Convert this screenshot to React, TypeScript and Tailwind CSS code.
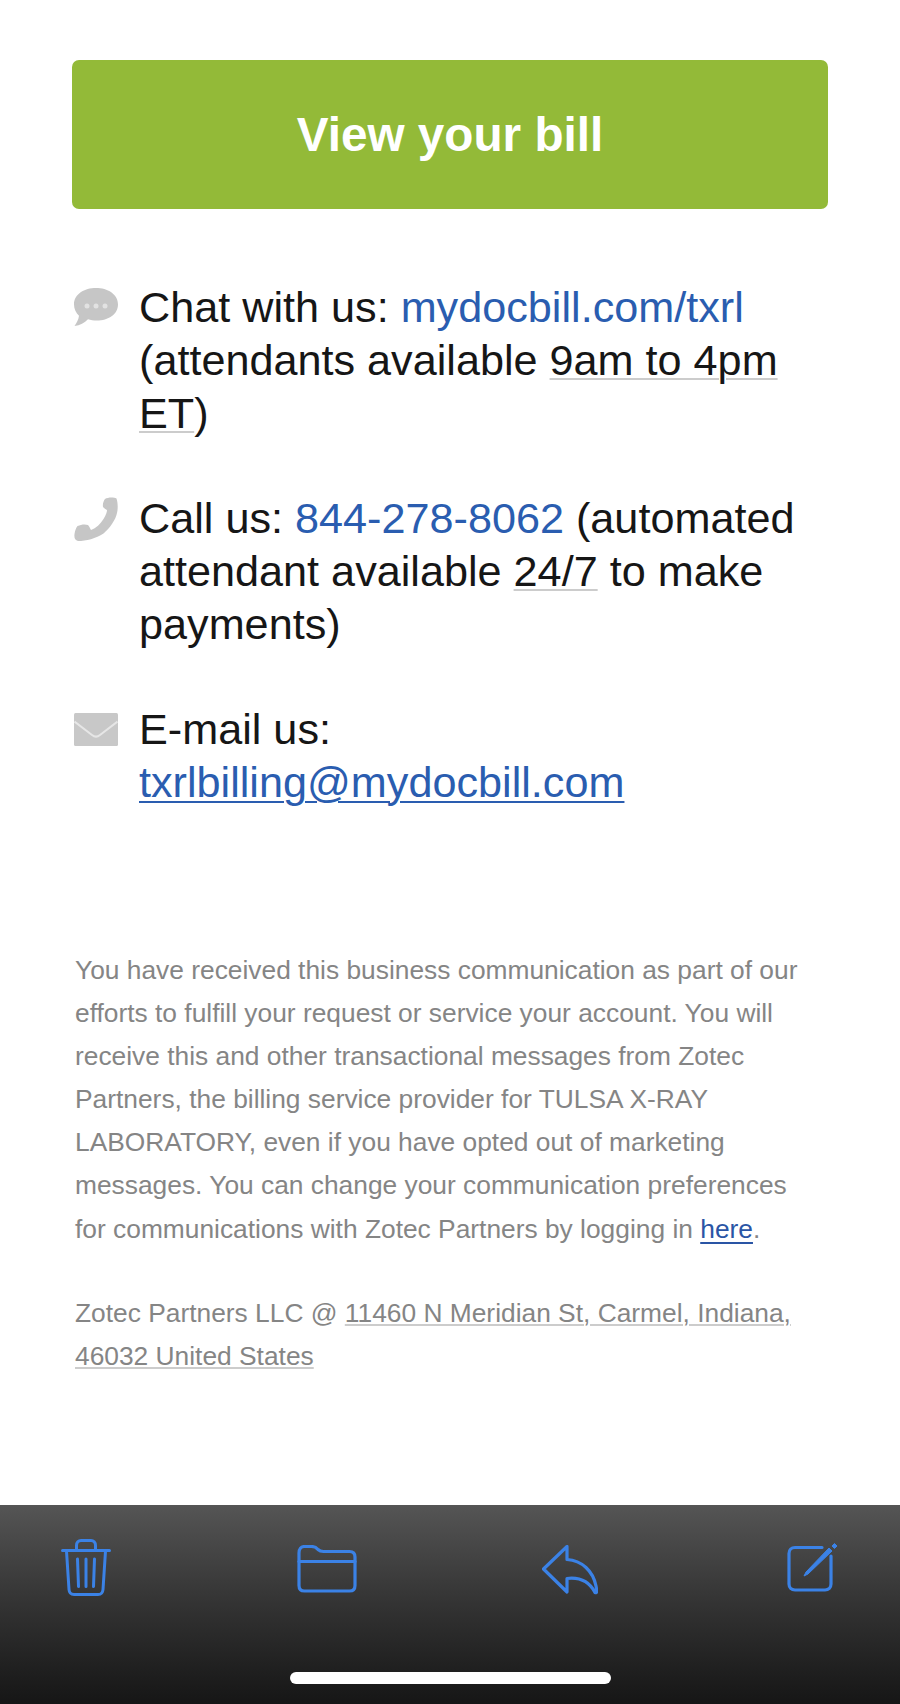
const blue = "text-[#2a5db0]";

function ChatIcon() {
  return (
    <svg width="44" height="38" viewBox="0 0 44 38" className="block">
      <path d="M22 0C33.5 0 44 6 44 16.5C44 26.5 34 32.5 23 32.5C19.5 32.5 16.5 32 14 31.2C10.5 34.5 6 37.5 0.5 38C2.5 35 4.5 32 5 27.8C2 25 0 21 0 16.5C0 6 10.5 0 22 0Z" fill="#c6c6c6" />
      <circle cx="13" cy="18" r="2.5" fill="#e2e2e2" />
      <circle cx="22" cy="18" r="2.5" fill="#e2e2e2" />
      <circle cx="31" cy="18" r="2.5" fill="#e2e2e2" />
    </svg>
  );
}

function PhoneIcon() {
  return (
    <svg width="44" height="44" viewBox="0 0 44 44" className="block">
      <path d="M31 2C34 0 40 0 42.5 1.5C44 6 44 12 43 16C41.5 23 36 31 29.5 36.5C22 41.5 12 44 4 44C1 43.5 0 41 0.5 37C1 33.5 2 31 3.5 29C7 27.5 11 27 14 28C15.5 29.5 16 31.5 17 33C22 31 26.5 27 29.5 22C32 18 33 15 33 13C31 12 30 11 29 10C28.5 7 29.5 4 31 2Z" fill="#c6c6c6" />
    </svg>
  );
}

function MailIcon() {
  return (
    <svg width="44" height="33" viewBox="0 0 44 33" className="block">
      <rect width="44" height="33" rx="1.5" fill="#c8c8c8" />
      <path d="M0.5 8.5L18 22C20.5 24 23.5 24 26 22L43.5 8.5" fill="none" stroke="#e6e6e6" strokeWidth="2" />
    </svg>
  );
}

function TrashIcon() {
  return (
    <svg width="50" height="58" viewBox="0 0 50 58" fill="none" stroke="#3b82e6" strokeWidth="3" strokeLinecap="round" strokeLinejoin="round" className="block">
      <path d="M1.5 11.5H48.5" />
      <path d="M15.5 11V6.5C15.5 3.5 17.5 1.5 20 1.5H30C32.5 1.5 34.5 3.5 34.5 6.5V11" />
      <path d="M5.5 12L8 50.5C8.2 53.5 10 55.5 13 55.5H37C40 55.5 41.8 53.5 42 50.5L44.5 12" />
      <path d="M16.5 20L17.5 47.5M25 20V47.5M33.5 20L32.5 47.5" />
    </svg>
  );
}

function FolderIcon() {
  return (
    <svg width="60" height="48" viewBox="0 0 60 48" fill="none" stroke="#3b82e6" strokeWidth="3.2" strokeLinecap="round" strokeLinejoin="round" className="block">
      <path d="M2 8C2 4 4 1.5 7.5 1.5H14.5C18 1.5 19.5 2.8 21 4.5C22.5 6 24 6.5 26.5 6.5H52.5C56 6.5 58 8.5 58 12V40.5C58 44 56 46 52.5 46H7.5C4 46 2 44 2 40.5Z" />
      <path d="M2 16.5H58" />
    </svg>
  );
}

function ReplyIcon() {
  return (
    <svg width="56" height="50" viewBox="0 0 56 50" fill="none" stroke="#3b82e6" strokeWidth="3.2" strokeLinecap="round" strokeLinejoin="round" className="block">
      <path d="M25 1.5L1.5 24L25 47V33.5C38 32 47 36 53 47.5C55 48.5 55 46 54 41C51 26 40 15.5 25 14.5Z" />
    </svg>
  );
}

function ComposeIcon() {
  return (
    <svg width="52" height="52" viewBox="0 0 52 52" fill="none" className="block">
      <path d="M36 6.5H9C5.5 6.5 3 9 3 12.5V43C3 46.5 5.5 49 9 49H39C42.5 49 45 46.5 45 43V15" stroke="#3b82e6" strokeWidth="3.2" strokeLinecap="round" />
      <path d="M18 35L20 31L43 7L46 10L22 33Z" fill="#3b82e6" stroke="#3b82e6" strokeWidth="1" strokeLinejoin="round" />
      <path d="M46 5L48.5 2.5L51 5L48.5 7.5Z" fill="#3b82e6" stroke="#3b82e6" strokeWidth="1" strokeLinejoin="round" />
    </svg>
  );
}

const dottedLarge = "underline decoration-[#cccccc] decoration-2 underline-offset-[3px]";
const dottedSmall = "underline decoration-[#cccccc] decoration-2 underline-offset-[2px]";

export default function App() {
  return (
    <div className="w-[900px] h-[1704px] bg-white flex flex-col font-['Liberation_Sans',Arial,sans-serif] overflow-hidden">
      <main className="flex-1 pt-[60px]">
        <div className="mx-[72px] h-[149px] bg-[#93ba38] rounded-[7px] flex items-center justify-center text-white font-bold text-[47.7px]">
          View your bill
        </div>

        <div className="mt-[72px] ml-[74px] mr-[72px] flex flex-col gap-[52px] text-[43.2px] leading-[53px] text-[#161616]">
          <div className="flex">
            <div className="w-[65px] shrink-0 pt-[7px]"><ChatIcon /></div>
            <p>
              Chat with us: <span className={blue}>mydocbill.com/txrl</span> (attendants available{" "}
              <span className={dottedLarge}>9am to 4pm ET</span>)
            </p>
          </div>
          <div className="flex">
            <div className="w-[65px] shrink-0 pt-[5px]"><PhoneIcon /></div>
            <p>
              Call us: <span className={blue}>844-278-8062</span> (automated attendant available{" "}
              <span className={dottedLarge}>24/7</span> to make payments)
            </p>
          </div>
          <div className="flex">
            <div className="w-[65px] shrink-0 pt-[10px]"><MailIcon /></div>
            <p>
              E-mail us:
              <br />
              <span className={`${blue} underline underline-offset-[4px] decoration-2`}>txrlbilling@mydocbill.com</span>
            </p>
          </div>
        </div>

        <div className="mt-[140px] ml-[75px] mr-[76px] text-[26.35px] leading-[43.1px] text-[#858585]">
          <p>
            You have received this business communication as part of our efforts to fulfill your request or service your account. You will receive this and other transactional messages from Zotec Partners, the billing service provider for TULSA X-RAY LABORATORY, even if you have opted out of marketing messages. You can change your communication preferences for communications with Zotec Partners by logging in{" "}
            <span className="text-[#2a55a5] underline underline-offset-[4px]">here</span>.
          </p>
          <p className="mt-[41px]">
            Zotec Partners LLC @ <span className={dottedSmall}>11460 N Meridian St, Carmel, Indiana, 46032 United States</span>
          </p>
        </div>
      </main>

      <footer className="relative h-[199px] shrink-0 bg-gradient-to-b from-[#555555] via-[#333333] to-[#161616] pl-[61px] pt-[34px] flex items-start">
        <TrashIcon />
        <div className="ml-[186px] mt-[6px]"><FolderIcon /></div>
        <div className="ml-[185px] mt-[6px]"><ReplyIcon /></div>
        <div className="ml-[188px] mt-[2px]"><ComposeIcon /></div>
        <div className="absolute left-[290px] bottom-[20px] w-[321px] h-[12px] rounded-full bg-white" />
      </footer>
    </div>
  );
}
